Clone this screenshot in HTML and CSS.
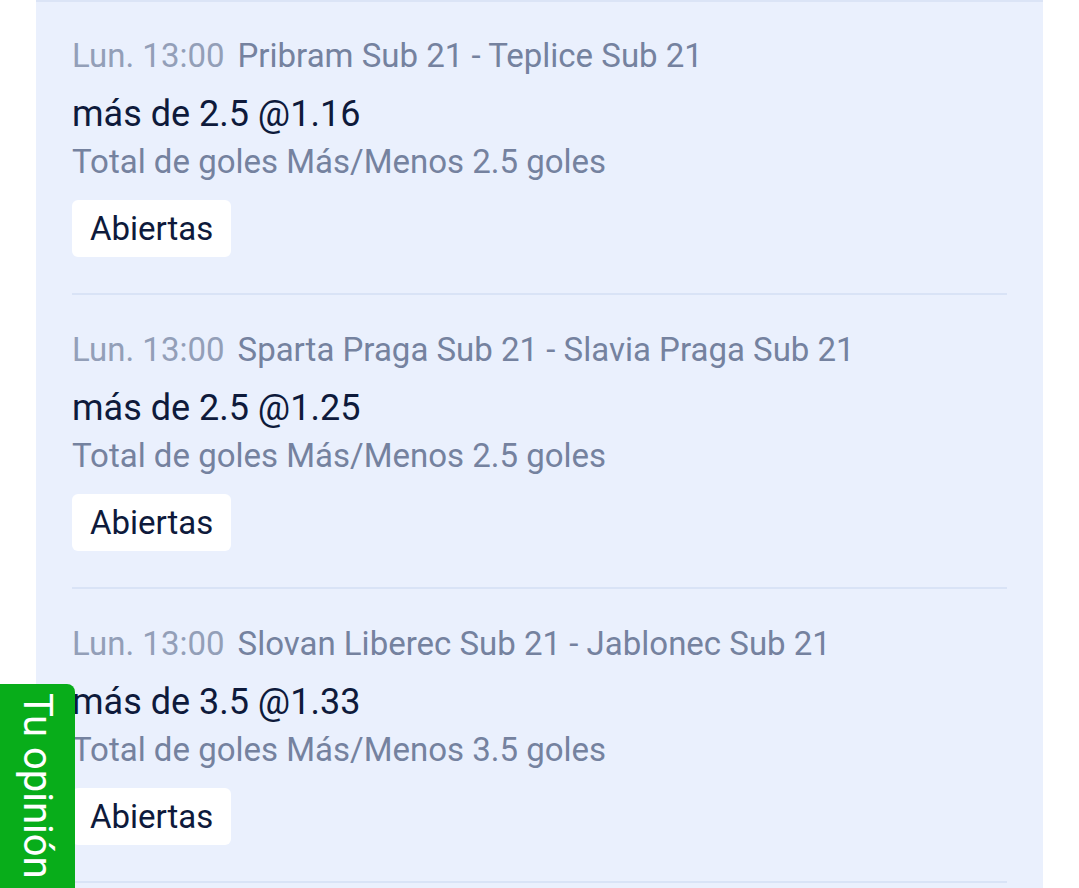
FILE: index.html
```html
<!DOCTYPE html>
<html lang="es">
<head>
    <meta charset="UTF-8">
    <meta name="viewport" content="width=device-width, initial-scale=1.0">
    <title>Apuestas abiertas</title>

    <link rel="stylesheet" href="styles.css">
</head>
<body>
    <div class="panel">
        <div class="bet">
            <div class="event">
                <span class="time">Lun. 13:00</span>
                <span class="teams">Pribram Sub 21 - Teplice Sub 21</span>
            </div>
            <div class="pick">más de 2.5 @1.16</div>
            <div class="market">Total de goles Más/Menos 2.5 goles</div>
            <span class="status">Abiertas</span>
        </div>

        <div class="bet">
            <div class="event">
                <span class="time">Lun. 13:00</span>
                <span class="teams">Sparta Praga Sub 21 - Slavia Praga Sub 21</span>
            </div>
            <div class="pick">más de 2.5 @1.25</div>
            <div class="market">Total de goles Más/Menos 2.5 goles</div>
            <span class="status">Abiertas</span>
        </div>

        <div class="bet">
            <div class="event">
                <span class="time">Lun. 13:00</span>
                <span class="teams">Slovan Liberec Sub 21 - Jablonec Sub 21</span>
            </div>
            <div class="pick">más de 3.5 @1.33</div>
            <div class="market">Total de goles Más/Menos 3.5 goles</div>
            <span class="status">Abiertas</span>
        </div>
    </div>

    <!-- feedback tab fixed to the left edge -->
    <div class="feedback">Tu opinión</div>
</body>
</html>
```

FILE: styles.css
```css
/* General styling */
body, html {
    margin: 0;
    padding: 0;
    width: 100%;
    height: 100%;
    background-color: #fff;
    font-family: Roboto, "Liberation Sans", sans-serif;
    overflow: hidden;
}

/* Panel styling */
.panel {
    margin: 0 36px;
    background-color: #eaf0fd;
    border-top: 2px solid #dbe4f6;
    min-height: 100%;
}

/* Bet row styling */
.bet {
    margin: 0 36px;
    padding-top: 32px;
    padding-bottom: 36px;
    border-bottom: 2px solid #d9e3f6;
}

.bet + .bet {
    padding-top: 33px;
}

.event {
    display: flex;
    gap: 13px;
    font-size: 33px;
    line-height: 44px;
    white-space: nowrap;
}

.time {
    color: #939fb8;
}

.teams {
    color: #75829f;
}

.pick {
    margin-top: 12px;
    font-size: 36px;
    line-height: 48px;
    color: #0e1a3b;
}

.market {
    font-size: 33px;
    line-height: 48px;
    color: #75829f;
}

.status {
    display: inline-block;
    margin-top: 14px;
    padding: 0 18px;
    height: 57px;
    line-height: 57px;
    background-color: #fff;
    border-radius: 6px;
    font-size: 33px;
    color: #0e1a3b;
}

/* Feedback tab styling */
.feedback {
    position: fixed;
    left: 0;
    top: 684px;
    width: 75px;
    height: 220px;
    box-sizing: border-box;
    padding-top: 9px;
    background-color: #08ad1a;
    border-top-right-radius: 8px;
    color: #fff;
    font-size: 40px;
    line-height: 75px;
    writing-mode: vertical-rl;
}
```
